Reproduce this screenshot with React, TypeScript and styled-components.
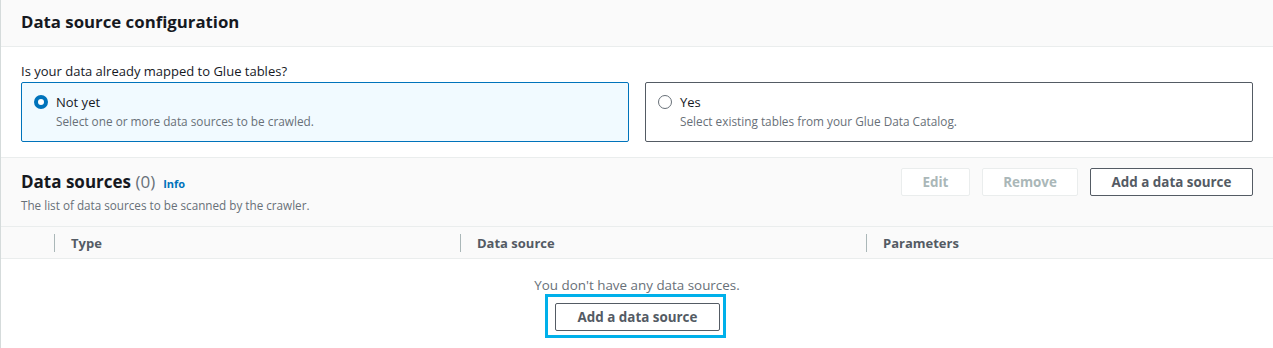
import React, { useState } from "react";
import styled, { createGlobalStyle } from "styled-components";

const GlobalStyle = createGlobalStyle`
  body {
    margin: 0;
    background: #ffffff;
    font-family: "Open Sans", "Liberation Sans", sans-serif;
    color: #16191f;
  }
`;

const Panel = styled.div`
  width: 1273px;
  height: 348px;
  overflow: hidden;
  border-left: 1px solid #d5dbdb;
  box-sizing: border-box;
  background: #ffffff;
`;

const PanelHeader = styled.header`
  height: 47px;
  box-sizing: border-box;
  display: flex;
  align-items: center;
  padding: 0 20px 4px;
  background: #fafafa;
  border-bottom: 1px solid #eaeded;

  h2 {
    margin: 0;
    font-size: 16.8px;
    font-weight: 700;
    color: #16191f;
  }
`;

const PanelBody = styled.div`
  padding: 14px 20px 15px;
`;

const FieldLabel = styled.div`
  font-size: 13px;
  line-height: 20px;
  color: #16191f;
  margin-bottom: 1px;
`;

const TileGrid = styled.div`
  display: grid;
  grid-template-columns: 1fr 1fr;
  gap: 16px;
`;

const Tile = styled.label<{ $selected: boolean }>`
  display: flex;
  gap: 8px;
  height: 60px;
  box-sizing: border-box;
  padding: 11px 12px 11px 12px;
  border: 1px solid ${(p) => (p.$selected ? "#0073bb" : "#545b64")};
  border-radius: 2px;
  background: ${(p) => (p.$selected ? "#f1faff" : "#ffffff")};
  cursor: pointer;
`;

const Radio = styled.span<{ $checked: boolean }>`
  flex: none;
  width: 14px;
  height: 14px;
  margin-top: 1px;
  box-sizing: border-box;
  border-radius: 50%;
  border: ${(p) => (p.$checked ? "4px solid #0073bb" : "1.5px solid #687078")};
  background: #ffffff;
`;

const TileText = styled.div`
  display: flex;
  flex-direction: column;

  strong {
    font-size: 13px;
    font-weight: 400;
    line-height: 17px;
    color: #16191f;
  }

  span {
    font-size: 11.8px;
    line-height: 20px;
    color: #687078;
  }
`;

const TableHeader = styled.div`
  display: flex;
  justify-content: space-between;
  padding: 10px 20px 10px;
  height: 70px;
  box-sizing: border-box;
  background: #fafafa;
  border-top: 1px solid #eaeded;
  border-bottom: 1px solid #eaeded;
`;

const TitleBlock = styled.div`
  display: flex;
  flex-direction: column;
  gap: 4px;
  padding-top: 3px;
`;

const TitleLine = styled.div`
  display: flex;
  align-items: baseline;
  gap: 8px;

  h3 {
    margin: 0;
    font-size: 17px;
    font-weight: 700;
    line-height: 22px;
  }

  em {
    font-style: normal;
    font-weight: 400;
    color: #687078;
  }

  a {
    font-size: 11px;
    font-weight: 700;
    color: #0073bb;
    text-decoration: none;
  }
`;

const Description = styled.p`
  margin: 0;
  font-size: 11.7px;
  line-height: 16px;
  color: #687078;
`;

const Actions = styled.div`
  display: flex;
  gap: 12px;
  align-items: flex-start;
`;

const Button = styled.button<{ $width: number }>`
  width: ${(p) => p.$width}px;
  height: 28px;
  box-sizing: border-box;
  border-radius: 2px;
  border: 1px solid #545b64;
  background: #ffffff;
  color: #545b64;
  font-family: inherit;
  font-size: 13.4px;
  font-weight: 700;
  cursor: pointer;

  &:disabled {
    border-color: #eaeded;
    color: #aab7b8;
    cursor: default;
  }
`;

const ColumnRow = styled.div`
  display: grid;
  grid-template-columns: 53px 406px 406px 1fr;
  height: 31px;
  background: #fafafa;
  border-bottom: 1px solid #eaeded;
`;

const ColumnHead = styled.div<{ $divider?: boolean }>`
  display: flex;
  align-items: center;
  padding-left: 16px;
  border-left: 1px solid ${(p) => (p.$divider ? "#aab7b8" : "transparent")};
  margin: 7px 0;
  font-size: 13px;
  font-weight: 700;
  color: #545b64;
`;

const Empty = styled.div`
  display: flex;
  flex-direction: column;
  align-items: center;
  padding-top: 17px;

  p {
    margin: 0;
    font-size: 13.4px;
    line-height: 18px;
    color: #687078;
  }
`;

const Highlight = styled.div`
  padding: 6px 3px 4px 7px;
  border: 3px solid #00b0ea;
  margin-left: -3px;
`;

const options = [
  { id: "no", title: "Not yet", desc: "Select one or more data sources to be crawled." },
  { id: "yes", title: "Yes", desc: "Select existing tables from your Glue Data Catalog." },
];

const App: React.FC = () => {
  const [mapped, setMapped] = useState("no");

  return (
    <Panel>
      <GlobalStyle />
      <PanelHeader>
        <h2>Data source configuration</h2>
      </PanelHeader>

      <PanelBody>
        <FieldLabel>Is your data already mapped to Glue tables?</FieldLabel>
        <TileGrid>
          {options.map((o) => (
            <Tile key={o.id} $selected={mapped === o.id} onClick={() => setMapped(o.id)}>
              <Radio $checked={mapped === o.id} />
              <TileText>
                <strong>{o.title}</strong>
                <span>{o.desc}</span>
              </TileText>
            </Tile>
          ))}
        </TileGrid>
      </PanelBody>

      <TableHeader>
        <TitleBlock>
          <TitleLine>
            <h3>
              Data sources <em>(0)</em>
            </h3>
            <a href="#">Info</a>
          </TitleLine>
          <Description>The list of data sources to be scanned by the crawler.</Description>
        </TitleBlock>
        <Actions>
          <Button $width={69} disabled>
            Edit
          </Button>
          <Button $width={96} disabled>
            Remove
          </Button>
          <Button $width={163}>Add a data source</Button>
        </Actions>
      </TableHeader>

      <ColumnRow>
        <ColumnHead />
        <ColumnHead $divider>Type</ColumnHead>
        <ColumnHead $divider>Data source</ColumnHead>
        <ColumnHead $divider>Parameters</ColumnHead>
      </ColumnRow>

      <Empty>
        <p>You don't have any data sources.</p>
        <Highlight>
          <Button $width={165}>Add a data source</Button>
        </Highlight>
      </Empty>
    </Panel>
  );
};

export default App;
